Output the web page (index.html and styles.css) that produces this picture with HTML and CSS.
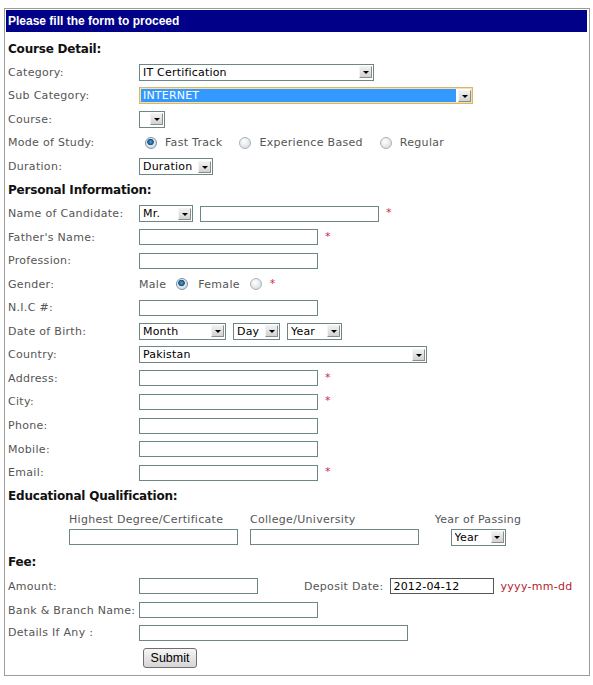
FILE: index.html
```html
<!DOCTYPE html>
<html>
<head>
<meta charset="utf-8">
<title>Registration Form</title>
<link rel="stylesheet" href="styles.css">
</head>
<body>
<form class="box">
  <div class="bar">Please fill the form to proceed</div>
  <div class="content">
    <div class="row sec">Course Detail:</div>
    <div class="row"><span class="lbl">Category:</span><span class="sel w235"><select><option>IT Certification</option></select><i class="arr"></i></span></div>
    <div class="row"><span class="lbl">Sub Category:</span><span class="sel w334 focus"><select><option>INTERNET</option></select><i class="arr"></i></span></div>
    <div class="row"><span class="lbl">Course:</span><span class="sel w26"><select><option></option></select><i class="arr"></i></span></div>
    <div class="row"><span class="lbl">Mode of Study:</span>
      <div class="modes">
        <label class="opt"><input type="radio" name="mode" checked>Fast Track</label>
        <label class="opt"><input type="radio" name="mode">Experience Based</label>
        <label class="opt"><input type="radio" name="mode">Regular</label>
      </div>
    </div>
    <div class="row"><span class="lbl">Duration:</span><span class="sel w74"><select><option>Duration</option></select><i class="arr"></i></span></div>

    <div class="row sec">Personal Information:</div>
    <div class="row"><span class="lbl">Name of Candidate:</span><span class="sel w54"><select><option>Mr.</option></select><i class="arr"></i></span><input class="txt w179 ml7" type="text"><span class="req">*</span></div>
    <div class="row"><span class="lbl">Father's Name:</span><input class="txt w179" type="text"><span class="req">*</span></div>
    <div class="row"><span class="lbl">Profession:</span><input class="txt w179" type="text"></div>
    <div class="row"><span class="lbl">Gender:</span>
      <div class="gender">
        <span>Male</span><input type="radio" name="gender" checked><span class="fem">Female</span><input type="radio" name="gender"><span class="req">*</span>
      </div>
    </div>
    <div class="row"><span class="lbl">N.I.C #:</span><input class="txt w179" type="text"></div>
    <div class="row"><span class="lbl">Date of Birth:</span>
      <span class="sel w87"><select><option>Month</option></select><i class="arr"></i></span>
      <span class="sel w47 ml7"><select><option>Day</option></select><i class="arr"></i></span>
      <span class="sel w55 ml7"><select><option>Year</option></select><i class="arr"></i></span>
    </div>
    <div class="row"><span class="lbl">Country:</span><span class="sel w288"><select><option>Pakistan</option></select><i class="arr"></i></span></div>
    <div class="row"><span class="lbl">Address:</span><input class="txt w179" type="text"><span class="req">*</span></div>
    <div class="row"><span class="lbl">City:</span><input class="txt w179" type="text"><span class="req">*</span></div>
    <div class="row"><span class="lbl">Phone:</span><input class="txt w179" type="text"></div>
    <div class="row"><span class="lbl">Mobile:</span><input class="txt w179" type="text"></div>
    <div class="row"><span class="lbl">Email:</span><input class="txt w179" type="text"><span class="req">*</span></div>

    <div class="row sec">Educational Qualification:</div>
    <div class="edu">
      <span>Highest Degree/Certificate</span>
      <span>College/University</span>
      <span class="center">Year of Passing</span>
      <input class="txt" type="text">
      <input class="txt" type="text">
      <span class="center"><span class="sel w55"><select><option>Year</option></select><i class="arr"></i></span></span>
    </div>

    <div class="row sec fee">Fee:</div>
    <div class="row amount"><span class="lbl">Amount:</span><input class="txt w119" type="text"><span class="dep">Deposit Date:</span><input class="txt w104 dark" type="text" value="2012-04-12"><span class="hint">yyyy-mm-dd</span></div>
    <div class="row bank"><span class="lbl">Bank &amp; Branch Name:</span><input class="txt w179" type="text"></div>
    <div class="row details"><span class="lbl">Details If Any :</span><input class="txt w269" type="text"></div>
    <div class="submit-row"><button type="button" class="btn">Submit</button></div>
  </div>
</form>
</body>
</html>
```

FILE: styles.css
```css
html, body {
  margin: 0;
  padding: 0;
  background: #fff;
}
body {
  font-family: "DejaVu Sans", Verdana, sans-serif;
  font-size: 11px;
  letter-spacing: 0.3px;
  color: #555;
}
.box {
  margin: 8px 0 0 4px;
  width: 586px;
  box-sizing: border-box;
  border: 1px solid #9c9c9c;
  padding: 1px 2px 7px 1px;
}
.bar {
  height: 22px;
  background: #000088;
  color: #fff;
  font-family: "Liberation Sans", Arial, sans-serif;
  font-weight: bold;
  font-size: 12px;
  letter-spacing: 0;
  line-height: 22px;
  padding-left: 2px;
}
.content {
  padding: 5px 0 0 2px;
}
.row {
  display: flex;
  align-items: center;
  height: 23.55px;
}
.sec {
  font-weight: bold;
  font-size: 12px;
  color: #111;
  letter-spacing: -0.2px;
}
.lbl {
  width: 131px;
  flex: none;
}
.sel {
  display: inline-flex;
  align-items: center;
  box-sizing: border-box;
  height: 17px;
  border: 1px solid #6d8787;
  background: #fff;
  padding: 1px;
  flex: none;
}
.sel select {
  -webkit-appearance: none;
  appearance: none;
  border: 0;
  outline: none;
  background: transparent;
  font-family: "DejaVu Sans", Verdana, sans-serif;
  font-size: 11px;
  letter-spacing: 0.2px;
  color: #000;
  padding: 0 0 0 2px;
  margin: 0;
  height: 13px;
  line-height: 13px;
  flex: 1;
  min-width: 0;
}
.sel.focus {
  border-color: #d8b866;
  box-shadow: inset 0 0 0 1px #f3e2ad;
}
.sel.focus select {
  background: #3399ff;
  color: #fff;
  margin-right: 2px;
}
.arr {
  flex: none;
  width: 13px;
  height: 12px;
  box-sizing: border-box;
  border: 1px solid;
  border-color: #f4f4f4 #8c8c8c #8c8c8c #f4f4f4;
  background: linear-gradient(#f0f0f0, #d2d2d2);
  display: flex;
  align-items: flex-end;
  justify-content: center;
  padding-bottom: 3px;
}
.arr::after {
  content: "";
  border-left: 3px solid transparent;
  border-right: 3px solid transparent;
  border-top: 3px solid #000;
}
.txt {
  box-sizing: border-box;
  height: 16px;
  border: 1px solid #6d8787;
  background: #fff;
  padding: 0 2px;
  margin: 0;
  font-family: "DejaVu Sans", Verdana, sans-serif;
  font-size: 11px;
  letter-spacing: 0.2px;
  color: #000;
  outline: none;
  flex: none;
}
.w26 { width: 26px; }
.w47 { width: 47px; }
.w54 { width: 54px; }
.w55 { width: 55px; }
.w74 { width: 74px; }
.w87 { width: 87px; }
.w104 { width: 104px; }
.w119 { width: 119px; }
.w179 { width: 179px; }
.w235 { width: 235px; }
.w269 { width: 269px; }
.w288 { width: 288px; }
.w334 { width: 334px; }
.row .ml7 { margin-left: 7px; }

.req {
  color: #cc2a4a;
  margin-left: 7px;
  font-size: 11px;
  position: relative;
  top: -1px;
}
input[type="radio"] {
  -webkit-appearance: none;
  appearance: none;
  width: 12px;
  height: 12px;
  margin: 0;
  border-radius: 50%;
  border: 1px solid #a9b3ba;
  background: radial-gradient(circle at 40% 35%, #ffffff, #d9dde0 80%);
  flex: none;
}
input[type="radio"]:checked {
  border-color: #7b93a8;
  background: radial-gradient(circle at 45% 40%, #5fa3cf 0, #1d5b86 2.5px, #1d5b86 3px, transparent 3.6px),
              radial-gradient(circle at 40% 35%, #ffffff, #cfd9e0 80%);
}
.modes {
  display: flex;
  align-items: center;
  padding-left: 6px;
}
.opt {
  display: inline-flex;
  align-items: center;
  gap: 8px;
  margin-right: 17px;
}
.gender {
  display: flex;
  align-items: center;
  gap: 10px;
}
.gender .req {
  margin-left: -2px;
}
.edu {
  display: grid;
  grid-template-columns: 169px 169px 94px;
  column-gap: 12px;
  grid-template-rows: 16px 19px;
  align-items: center;
  padding-left: 61px;
  margin-top: 4px;
}
.edu .txt {
  width: 169px;
}
.center {
  justify-self: center;
  display: flex;
  justify-content: center;
}
.fee {
  margin-top: 3px;
}
.amount {
  height: 26px;
}
.bank {
  height: 22px;
}
.details {
  height: 23px;
}
.dep {
  margin-left: 46px;
  margin-right: 7px;
}
.dark {
  border-color: #555;
}
.hint {
  color: #b3232e;
  margin-left: 6px;
}
.submit-row {
  padding: 4px 0 0 135px;
  height: 20px;
}
.btn {
  width: 54px;
  height: 20px;
  padding: 0;
  border: 1px solid #6f6f6f;
  border-radius: 3px;
  background: linear-gradient(#f7f7f7, #e4e4e4 50%, #d6d6d6);
  font-family: "Liberation Sans", Arial, sans-serif;
  font-size: 12.5px;
  letter-spacing: 0;
  color: #000;
}
```
